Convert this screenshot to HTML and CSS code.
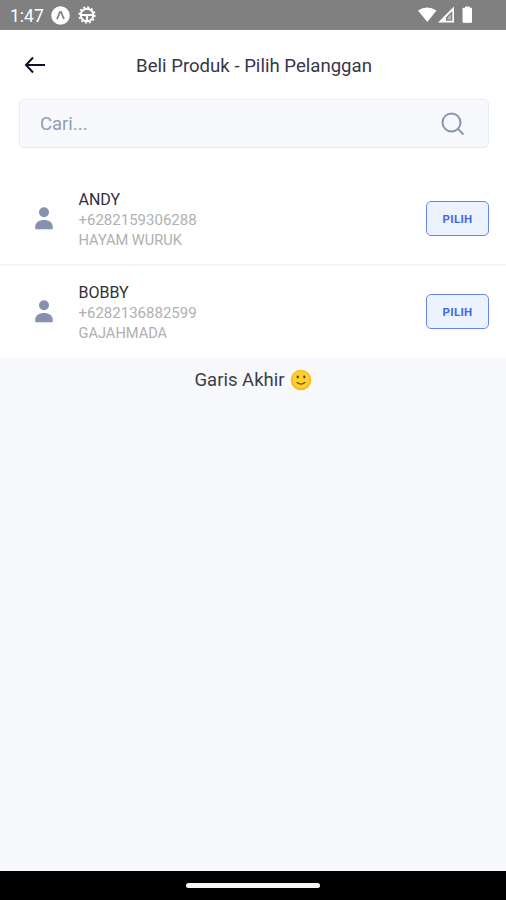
FILE: index.html
```html
<!DOCTYPE html>
<html lang="id">
<head>
<meta charset="utf-8">
<title>Beli Produk - Pilih Pelanggan</title>
<link rel="stylesheet" href="styles.css">
</head>
<body>
<div class="status">
  <span class="time">1:47</span>
  <svg class="app-icon" width="19" height="19" viewBox="0 0 19 19"><circle cx="9.500" cy="9.500" r="9.300" fill="#fff"/><path d="M5.900 13Q7.800 9.500 8.700 6.200h1.600Q11.200 9.500 13.100 13" fill="none" stroke="#808080" stroke-width="1.700"/></svg>
  <svg class="wheel" width="18" height="18" viewBox="0 0 18 18" fill="none" stroke="#fff"><circle cx="9" cy="9" r="6.300" stroke-width="1.900"/><circle cx="9" cy="9" r="7.900" stroke-width="1.500" stroke-dasharray="2.068 2.068"/><path d="M2.500 9h13" stroke-width="2"/><path d="M9 9v6" stroke-width="2.200"/></svg>
  <svg class="signals" width="56" height="18" viewBox="0 0 56 18"><path d="M0 4.500Q9-1.500 18.500 4.500L9.300 16Z" fill="#fff"/><path fill-rule="evenodd" d="M20 16.500 36 .5v16ZM28 14.800h6.300V5L28 11.300Z" fill="#fff"/><path d="M29.500 11.800 33 8.300v5.200h-3.500Z" fill="#b5b5b5"/><path d="M47.500 1h4v1.300h2v14h-8.500v-14h2.500Z" fill="#fff" stroke="#fff" stroke-linejoin="round" stroke-width="1"/></svg>
</div>
<header class="header">
  <svg class="back" width="22" height="20" viewBox="0 0 22 20" fill="none" stroke="#11102a" stroke-width="2"><path d="M21 10H2M9 2.500 2 10l7 7.500"/></svg>
  <h1>Beli Produk - Pilih Pelanggan</h1>
</header>
<div class="search">
  <span>Cari...</span>
  <svg width="24" height="24" viewBox="0 0 24 24" fill="none" stroke="#8a94b0" stroke-width="2"><circle cx="10.500" cy="10.500" r="9"/><path d="m16.900 16.900 5.600 5.600"/></svg>
</div>
<main class="list">
  <section class="row">
    <svg class="person" width="18" height="23" viewBox="0 0 18 23" fill="#8591ae"><circle cx="9" cy="5.200" r="5"/><path d="M.3 22.300v-3C.3 15.500 4 13 9 13s8.700 2.500 8.700 6.300v3Z"/></svg>
    <div class="info"><div class="name">ANDY</div><div class="phone">+6282159306288</div><div class="place">HAYAM WURUK</div></div>
    <button class="pick">PILIH</button>
  </section>
  <section class="row">
    <svg class="person" width="18" height="23" viewBox="0 0 18 23" fill="#8591ae"><circle cx="9" cy="5.200" r="5"/><path d="M.3 22.300v-3C.3 15.500 4 13 9 13s8.700 2.500 8.700 6.300v3Z"/></svg>
    <div class="info"><div class="name">BOBBY</div><div class="phone">+6282136882599</div><div class="place">GAJAHMADA</div></div>
    <button class="pick">PILIH</button>
  </section>
</main>
<div class="end">
  <span>Garis Akhir</span>
  <svg width="22" height="22" viewBox="0 0 22 22"><circle cx="11" cy="11" r="10.300" fill="#fbb81b"/><circle cx="11" cy="10.700" r="8.700" fill="#fdd02f"/><ellipse cx="7.700" cy="8" rx="1.100" ry="1.400" fill="#4b3c22"/><ellipse cx="14.300" cy="8" rx="1.100" ry="1.400" fill="#4b3c22"/><path d="M7 13.500q4 3.200 8 0" fill="none" stroke="#6b4b1c" stroke-width="1.200" stroke-linecap="round"/></svg>
</div>
<div class="nav"><div class="handle"></div></div>
</body>
</html>
```

FILE: styles.css
```css
* { box-sizing: border-box; }
body {
  margin: 0;
  height: 900px;
  display: flex;
  flex-direction: column;
  background: #f7f9fd;
  font-family: Roboto, sans-serif;
  overflow: hidden;
}
svg { display: block; flex: none; }
.status {
  height: 30px;
  flex: none;
  display: flex;
  align-items: center;
  padding: 0 32px 0 10px;
  background: #808080;
}
.time { width: 41px; color: #fff; font-size: 17.5px; line-height: 30px; padding-top: 2px; }
.wheel { margin-left: 8px; }
.signals { margin-left: auto; }
.header {
  height: 69px;
  flex: none;
  display: grid;
  grid-template-columns: 46px 1fr 46px;
  align-items: center;
  background: #fff;
}
.back { margin-left: 24px; }
h1 {
  margin: 2px 0 0 2px;
  text-align: center;
  font-size: 18.6px;
  line-height: 24px;
  font-weight: 400;
  color: #36364c;
}
.search {
  height: 49px;
  flex: none;
  display: flex;
  align-items: center;
  justify-content: space-between;
  padding: 0 23px 0 20px;
  border: 1px solid #e6eaf2;
  border-radius: 5px;
  background: #f7f9fd;
  color: #949db3;
  font-size: 18.5px;
  box-shadow: 0 0 0 100px #fff;
  margin: 0 17px 0 19px;
  clip-path: inset(0 -20px -25px -20px);
}
.list { margin-top: 24px; flex: none; background: #fff; position: relative; }
.row {
  height: 93px;
  display: flex;
  align-items: center;
  padding: 0 17px 0 35px;
}
.row + .row { box-shadow: 0 -1px #f4f5f6, inset 0 1px #f4f5f6; }
.info { margin-left: 25.5px; flex: 1; padding-top: 3px; font-size: 15px; line-height: 20.3px; color: #b0b0b0; }
.name { color: #30303c; font-size: 16px; }
.place { font-size: 14.6px; }
.pick {
  width: 63px;
  height: 35px;
  padding: 1px 0 0;
  border: 1px solid #6686f2;
  border-radius: 5px;
  background: #edf2ff;
  color: #4268e6;
  font: 700 11.5px Roboto, sans-serif;
  letter-spacing: .3px;
}
.end {
  flex: none;
  height: 44px;
  display: flex;
  align-items: center;
  justify-content: center;
  gap: 6px;
  padding-left: 1px;
  color: #3c3c46;
  font-size: 18.5px;
}
.nav {
  margin-top: auto;
  height: 29px;
  flex: none;
  background: #000;
  display: flex;
  justify-content: center;
  align-items: center;
}
.handle { width: 134px; height: 5px; border-radius: 3px; background: #f6f6f6; }
```
